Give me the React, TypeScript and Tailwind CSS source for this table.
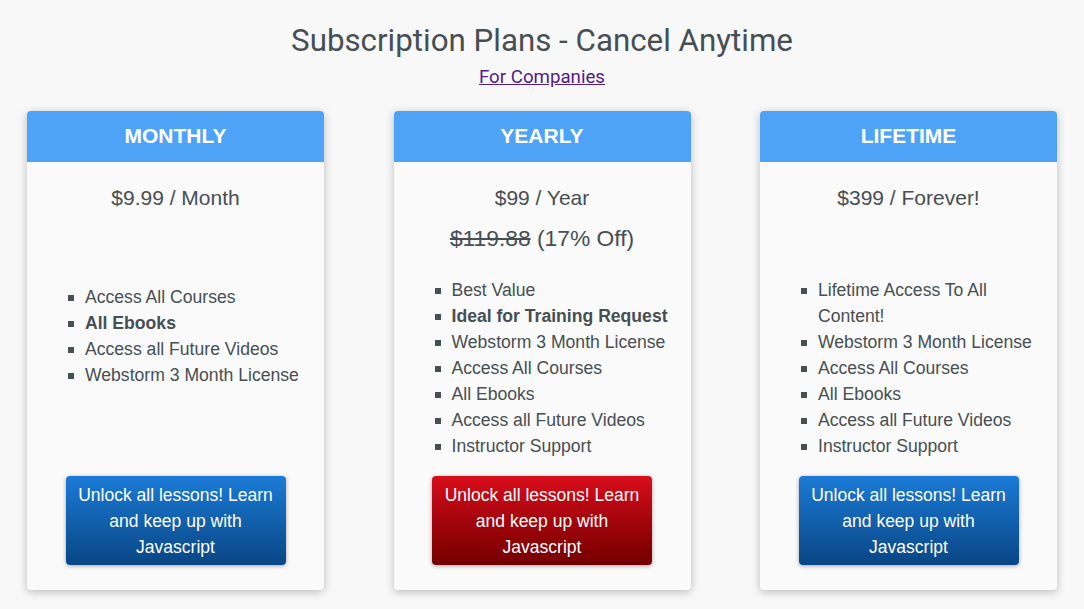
import React from 'react';

interface Plan {
  name: string;
  price: string;
  oldPrice?: string;
  discount?: string;
  features: { label: string; bold?: boolean }[];
  listClass: string;
  variant: 'blue' | 'red';
}

const plans: Plan[] = [
  {
    name: 'MONTHLY',
    price: '$9.99 / Month',
    features: [
      { label: 'Access All Courses' },
      { label: 'All Ebooks', bold: true },
      { label: 'Access all Future Videos' },
      { label: 'Webstorm 3 Month License' },
    ],
    listClass: 'mt-[74px]',
    variant: 'blue',
  },
  {
    name: 'YEARLY',
    price: '$99 / Year',
    oldPrice: '$119.88',
    discount: '(17% Off)',
    features: [
      { label: 'Best Value' },
      { label: 'Ideal for Training Request', bold: true },
      { label: 'Webstorm 3 Month License' },
      { label: 'Access All Courses' },
      { label: 'All Ebooks' },
      { label: 'Access all Future Videos' },
      { label: 'Instructor Support' },
    ],
    listClass: 'mt-[26px]',
    variant: 'red',
  },
  {
    name: 'LIFETIME',
    price: '$399 / Forever!',
    features: [
      { label: 'Lifetime Access To All Content!' },
      { label: 'Webstorm 3 Month License' },
      { label: 'Access All Courses' },
      { label: 'All Ebooks' },
      { label: 'Access all Future Videos' },
      { label: 'Instructor Support' },
    ],
    listClass: 'mt-[67px]',
    variant: 'blue',
  },
];

const PlanCard: React.FC<{ plan: Plan }> = ({ plan }) => {
  const btn =
    plan.variant === 'red'
      ? 'bg-gradient-to-b from-[#d80e1b] to-[#730000]'
      : 'bg-gradient-to-b from-[#1b7bd6] to-[#094685]';

  return (
    <div className="w-[297px] h-[479px] flex flex-col bg-[#fafafa] rounded-[4px] overflow-hidden shadow-[0_2px_8px_rgba(0,0,0,0.25)]">
      <div className="h-[51px] pb-[2px] bg-[#4fa3f7] flex items-center justify-center text-white text-[21px] font-bold">
        {plan.name}
      </div>

      <div className="pt-[24px] text-center text-[21px] leading-[24px] text-[#474f52]">
        <div>{plan.price}</div>
        {plan.oldPrice && (
          <div className="mt-[15px] text-[22.8px] leading-[26px]">
            <span className="line-through">{plan.oldPrice}</span> {plan.discount}
          </div>
        )}
      </div>

      <ul className={`${plan.listClass} pl-[58px] pr-[12px] text-[17.6px] leading-[26px] text-[#474f52]`}>
        {plan.features.map((f) => (
          <li key={f.label} className="relative">
            <span className="absolute left-[-17px] top-[11px] w-[6px] h-[6px] bg-[#474f52]" />
            <span className={f.bold ? 'font-bold' : ''}>{f.label}</span>
          </li>
        ))}
      </ul>

      <div className="mt-auto pb-[25px] flex justify-center">
        <button
          className={`${btn} w-[220px] h-[89px] rounded-[4px] text-white text-[17.5px] leading-[26px] px-[8px] shadow-[0_1px_4px_rgba(0,0,0,0.35)]`}
        >
          Unlock all lessons! Learn and keep up with Javascript
        </button>
      </div>
    </div>
  );
};

const App: React.FC = () => {
  return (
    <div className="min-h-[609px] w-full bg-[#f8f8f8] font-['Liberation_Sans',Arial,sans-serif]">
      <div className="pt-[21px] text-center font-['Roboto',sans-serif]">
        <h1 className="text-[31.3px] leading-[40px] text-[#474f52]">Subscription Plans - Cancel Anytime</h1>
        <a href="#" className="inline-block mt-[4px] text-[18.7px] leading-[24px] text-[#551a8b] underline">
          For Companies
        </a>
      </div>

      <div className="mt-[21px] px-[27px] flex justify-between">
        {plans.map((p) => (
          <PlanCard key={p.name} plan={p} />
        ))}
      </div>
    </div>
  );
};

export default App;
